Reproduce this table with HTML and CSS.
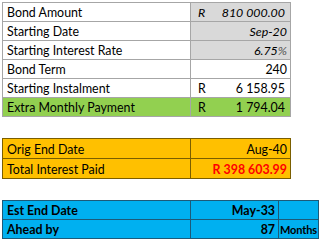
FILE: index.html
```html
<!DOCTYPE html>
<html>
<head>
<meta charset="utf-8">
<link rel="stylesheet" href="styles.css">
</head>
<body>
<div class="sheet">
  <table class="tbl t1">
    <colgroup><col class="c-lbl"><col class="c-val"></colgroup>
    <tr><td class="lbl">Bond Amount</td><td class="val grey it acc"><span class="cur">R</span><span>810 000.00</span></td></tr>
    <tr><td class="lbl">Starting Date</td><td class="val grey it">Sep-20</td></tr>
    <tr><td class="lbl">Starting Interest Rate</td><td class="val grey it">6.75<span class="pct">%</span></td></tr>
    <tr><td class="lbl">Bond Term</td><td class="val">240</td></tr>
    <tr><td class="lbl">Starting Instalment</td><td class="val acc"><span class="cur">R</span><span>6 158.95</span></td></tr>
    <tr class="green"><td class="lbl">Extra Monthly Payment</td><td class="val acc"><span class="cur">R</span><span>1 794.04</span></td></tr>
  </table>
  <table class="tbl t2">
    <colgroup><col class="c-lbl"><col class="c-val"></colgroup>
    <tr><td class="lbl">Orig End Date</td><td class="val">Aug-40</td></tr>
    <tr><td class="lbl">Total Interest Paid</td><td class="val red">R 398 603.99</td></tr>
  </table>
  <table class="tbl t3">
    <colgroup><col class="c-lbl"><col class="c-val3"><col class="c-unit"></colgroup>
    <tr><td class="lbl">Est End Date</td><td class="val">May-33</td><td class="unit"></td></tr>
    <tr><td class="lbl">Ahead by</td><td class="val">87</td><td class="unit">Months</td></tr>
  </table>
</div>
</body>
</html>
```
FILE: styles.css
```css
html, body {
  margin: 0;
  padding: 0;
  background: #ffffff;
}
.sheet {
  padding: 2px 0 0 2px;
  display: flex;
  flex-direction: column;
  align-items: flex-start;
  gap: 21px;
  font-family: "Lato", "Liberation Sans", sans-serif;
  font-size: 12.4px;
  color: #000;
}
.tbl {
  border-collapse: collapse;
  table-layout: fixed;
}
.t1, .t2 { width: 288px; }
.t3 { width: 316px; }
.c-lbl { width: 188px; }
.c-val { width: 100px; }
.c-val3 { width: 88px; }
.c-unit { width: 40px; }
.tbl td {
  box-sizing: border-box;
  padding: 0 3px 1px 4px;
  vertical-align: bottom;
  white-space: nowrap;
  line-height: 15px;
}
.val { text-align: right; }
.unit { text-align: center; padding: 0 0 1px 0 !important; font-size: 11px; letter-spacing: -0.1px; }
.acc { padding-right: 5px !important; }
.acc .cur { float: left; padding-left: 3px; }
.pct { color: #555; }
.t1 td { border: 1px solid #a6a6a6; height: 19px; }
.t1 .grey { background: #d9d9d9; }
.t1 .it { font-style: italic; }
.t1 .green td { background: #92d050; }
.t2 { border: 1px solid #222; }
.t2 td { background: #ffc000; border: 1px solid #7a5e00; height: 20px; }
.t2 .red { color: #ff0000; font-weight: bold; }
.t3 td { background: #00b0f0; border: 1px solid #1d5a78; height: 19px; font-weight: bold; }
```
